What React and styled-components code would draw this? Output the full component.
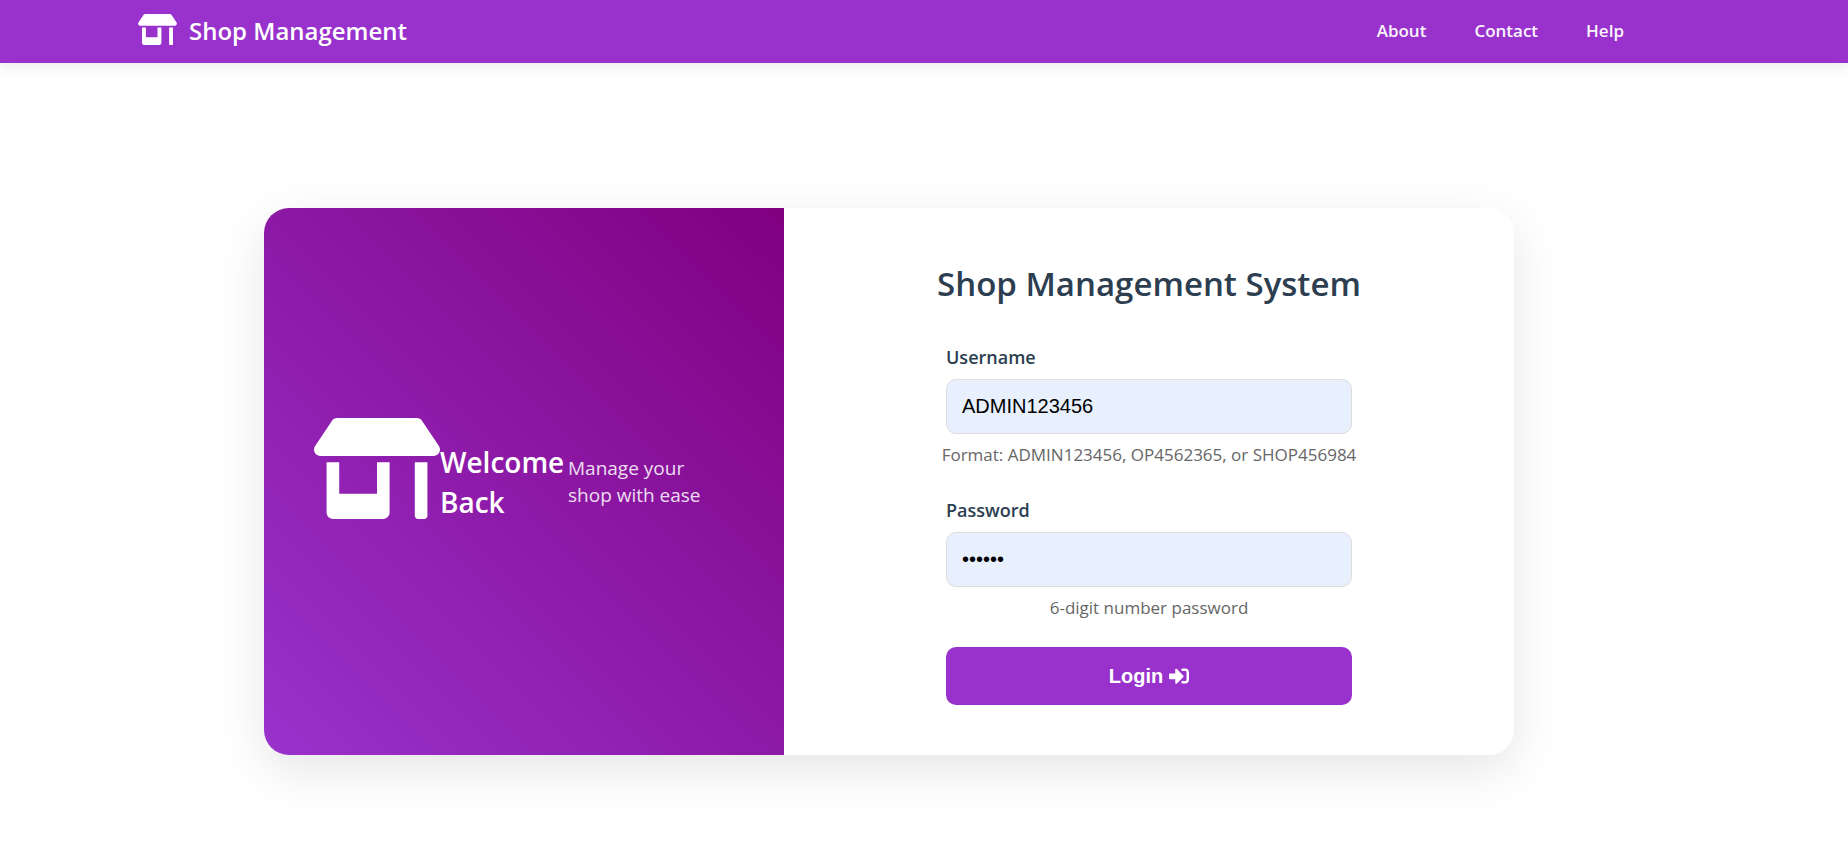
import React from 'react';
import styled, { createGlobalStyle } from 'styled-components';
import { FaStoreAlt, FaSignInAlt } from 'react-icons/fa';

const App = () => {
	return (
		<>
			<GlobalStyle />
			<Header>
				<Brand href="#home">
					<BrandIcon />
					Shop Management
				</Brand>
				<Nav>
					<NavLink href="#about">About</NavLink>
					<NavLink href="#contact">Contact</NavLink>
					<NavLink href="#help">Help</NavLink>
				</Nav>
			</Header>
			<Main>
				<Card>
					<Welcome>
						<WelcomeIcon />
						<WelcomeTitle>Welcome Back</WelcomeTitle>
						<WelcomeText>Manage your shop with ease</WelcomeText>
					</Welcome>
					<FormPanel>
						<Title>Shop Management System</Title>
						<Form onSubmit={(e) => e.preventDefault()}>
							<Field>
								<Label htmlFor="username">Username</Label>
								<Input id="username" type="text" defaultValue="ADMIN123456" />
								<Hint>Format: ADMIN123456, OP4562365, or SHOP456984</Hint>
							</Field>
							<Field>
								<Label htmlFor="password">Password</Label>
								<Input id="password" type="password" defaultValue="123456" />
								<Hint>6-digit number password</Hint>
							</Field>
							<LoginButton type="submit">
								Login <FaSignInAlt />
							</LoginButton>
						</Form>
					</FormPanel>
				</Card>
			</Main>
		</>
	);
};

const GlobalStyle = createGlobalStyle`
	* {
		box-sizing: border-box;
		margin: 0;
		padding: 0;
	}
	body {
		background: #fff;
		color: #2c3e50;
		font-family: 'Segoe UI', 'Open Sans', 'Noto Sans', sans-serif;
	}
`;

const Header = styled.header`
	display: flex;
	align-items: center;
	justify-content: space-between;
	min-height: 63px;
	padding: 0 224px 2px 138px;
	background: #9932cc;
	box-shadow: 0 2px 15px rgba(0, 0, 0, 0.1);
`;

const Brand = styled.a`
	display: flex;
	align-items: center;
	gap: 12px;
	color: #fff;
	font-size: 24px;
	font-weight: 600;
	line-height: 32px;
	text-decoration: none;
`;

const BrandIcon = styled(FaStoreAlt)`
	width: 39px;
	height: 31px;
	margin-bottom: 2px;
`;

const Nav = styled.nav`
	display: flex;
	gap: 48px;
`;

const NavLink = styled.a`
	color: #fff;
	font-size: 17px;
	font-weight: 600;
	line-height: 24px;
	text-decoration: none;
	opacity: 0.95;
`;

const Main = styled.main`
	display: flex;
	justify-content: center;
	padding: 145px 70px 64px 0;
`;

const Card = styled.section`
	display: flex;
	width: 100%;
	max-width: 1250px;
	overflow: hidden;
	background: #fff;
	border-radius: 25px;
	box-shadow: 0 15px 50px rgba(0, 0, 0, 0.1);
`;

const Welcome = styled.div`
	display: flex;
	flex: 0 0 520px;
	align-items: center;
	padding: 50px;
	background: linear-gradient(45deg, #9932cc, #800080);
	color: #fff;
`;

const WelcomeIcon = styled(FaStoreAlt)`
	flex: none;
	width: 126px;
	height: 101px;
	margin-bottom: 26px;
`;

const WelcomeTitle = styled.h2`
	flex: 0 0 128px;
	font-size: 28px;
	font-weight: 600;
	line-height: 40px;
`;

const WelcomeText = styled.p`
	flex: 0 1 140px;
	font-size: 19px;
	line-height: 27px;
	opacity: 0.85;
`;

const FormPanel = styled.div`
	display: flex;
	flex: 1;
	flex-direction: column;
	align-items: center;
	padding: 50px;
`;

const Title = styled.h1`
	margin-bottom: 31px;
	font-size: 33px;
	font-weight: 600;
	line-height: 52px;
`;

const Form = styled.form`
	display: flex;
	flex-direction: column;
	width: 100%;
	max-width: 406px;
`;

const Field = styled.div`
	display: flex;
	flex-direction: column;
	margin-bottom: 26px;
`;

const Label = styled.label`
	margin-bottom: 6px;
	font-size: 18px;
	font-weight: 600;
	line-height: 32px;
`;

const Input = styled.input`
	width: 100%;
	height: 55px;
	padding: 0 15px;
	background: #e8f0fe;
	border: 1px solid #ddd;
	border-radius: 10px;
	color: #000;
	font-family: Arial, 'Liberation Sans', sans-serif;
	font-size: 20px;
	&:focus {
		outline: none;
		border-color: #9932cc;
	}
`;

const Hint = styled.small`
	align-self: center;
	margin-top: 8px;
	color: #666;
	font-size: 17px;
	line-height: 26px;
	white-space: nowrap;
`;

const LoginButton = styled.button`
	display: flex;
	align-items: center;
	justify-content: center;
	gap: 6px;
	height: 58px;
	background: #9932cc;
	border: none;
	border-radius: 10px;
	color: #fff;
	cursor: pointer;
	font-family: Arial, 'Liberation Sans', sans-serif;
	font-size: 20px;
	font-weight: 600;
	&:hover {
		background: #800080;
	}
`;

export default App;
